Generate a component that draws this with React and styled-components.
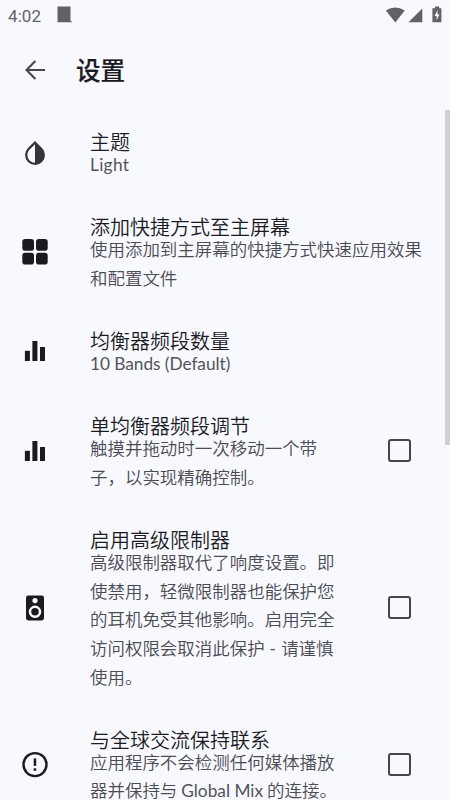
import React from "react";
import styled, { createGlobalStyle } from "styled-components";

const GlobalStyle = createGlobalStyle`
  * { box-sizing: border-box; }
  html, body { margin: 0; padding: 0; overflow: hidden; background: #f8f9ff; }
`;

const Screen = styled.main`
  width: 450px;
  height: 800px;
  overflow: hidden;
  display: flex;
  flex-direction: column;
  background: #f8f9ff;
  color: #1b1b1f;
  font-family: "Noto Sans CJK SC", sans-serif;
`;

const StatusBar = styled.header`
  flex: none;
  height: 30px;
  display: flex;
  align-items: center;
  padding: 0 8px 0 8px;
  color: #626266;
`;

const Clock = styled.span`
  width: 49px;
  font: 400 17px/30px Roboto, sans-serif;
  letter-spacing: 0.1px;
  padding-top: 1px;
`;

const StatusIcons = styled.div`
  margin-left: auto;
  display: flex;
  svg { display: block; }
`;

const AppBar = styled.div`
  flex: none;
  height: 80px;
  display: flex;
  align-items: center;
  padding-left: 25px;
  svg { display: block; margin-right: 30px; }
`;

const Heading = styled.h1`
  margin: 0;
  font-size: 24.5px;
  font-weight: 500;
  line-height: 36px;
  -webkit-text-stroke: 0.2px currentColor;
`;

const Content = styled.div`
  flex: 1;
  min-height: 0;
  display: flex;
  align-items: flex-start;
`;

const List = styled.div`
  width: 445px;
  height: 100%;
  overflow: hidden;
`;

const ScrollThumb = styled.div`
  width: 5px;
  height: 335px;
  background: #cfcfd5;
`;

const Row = styled.section`
  display: flex;
  align-items: center;
  height: ${(p) => 56.4 + p.$lines * 28.7}px;
`;

const IconSlot = styled.div`
  flex: none;
  width: 90px;
  padding-left: 20px;
  svg { display: block; }
`;

const Texts = styled.div`
  flex: none;
  width: ${(p) => (p.$wide ? 340 : 249)}px;
  padding-top: 6.8px;
`;

const Title = styled.h2`
  margin: 0;
  font-size: 20px;
  font-weight: 350;
  line-height: 17px;
  white-space: nowrap;
`;

const Description = styled.p`
  margin: 0;
  font-size: 17.48px;
  font-weight: 350;
  line-height: 28.7px;
  color: #4b4b53;
`;

const Latin = styled.span`
  font-family: Lato, sans-serif;
  font-weight: 400;
  font-size: 17.3px;
  line-height: 1;
  letter-spacing: ${(p) => p.$spacing || 0}px;
  color: #53535b;
`;

const Checkbox = styled.div`
  flex: none;
  width: 23px;
  height: 23px;
  margin-left: 49px;
  border: 2px solid #43474d;
  border-radius: 3px;
`;

const Icon = ({ children }) => (
  <svg width="30" height="30" viewBox="0 0 30 30" fill="#1b1b1f">{children}</svg>
);

const ContrastIcon = () => (
  <Icon>
    <path d="M15 4.6 L8.8 10.8 A8.8 8.8 0 1 0 21.2 10.8 Z" fill="none" stroke="#353538" strokeWidth="2.3" />
    <path d="M15 4 L21.8 10.7 A9.6 9.6 0 0 1 15 26.5 Z" fill="#353538" />
  </Icon>
);

const GridIcon = () => (
  <Icon>
    <rect x="2.3" y="2" width="11.7" height="11.7" rx="2.8" />
    <rect x="16" y="2" width="11.7" height="11.7" rx="2.8" />
    <rect x="2.3" y="15.8" width="11.7" height="11.7" rx="2.8" />
    <rect x="16" y="15.8" width="11.7" height="11.7" rx="2.8" />
  </Icon>
);

const BarsIcon = () => (
  <Icon>
    <rect x="4.9" y="14.8" width="5" height="10.2" />
    <rect x="12.4" y="5" width="5" height="20" />
    <rect x="20" y="11" width="5" height="14" />
  </Icon>
);

const SpeakerIcon = () => (
  <Icon>
    <rect x="6" y="2.4" width="18" height="25" rx="2.3" />
    <circle cx="15" cy="7.6" r="2.6" fill="#f8f9ff" />
    <circle cx="15" cy="18.8" r="5" fill="none" stroke="#f8f9ff" strokeWidth="2.5" />
  </Icon>
);

const AlertIcon = () => (
  <Icon>
    <circle cx="15" cy="14.6" r="11.5" fill="none" stroke="#1b1b1f" strokeWidth="2.4" />
    <rect x="13.7" y="8.4" width="2.5" height="7.5" />
    <rect x="13.7" y="18.3" width="2.5" height="2.5" />
  </Icon>
);

const settings = [
  { title: "主题", icon: ContrastIcon, lines: 1, text: <Latin $spacing={0.3}>Light</Latin> },
  { title: "添加快捷方式至主屏幕", icon: GridIcon, lines: 2, text: "使用添加到主屏幕的快捷方式快速应用效果和配置文件" },
  { title: "均衡器频段数量", icon: BarsIcon, lines: 1, text: <Latin $spacing={-0.05}>10 Bands (Default)</Latin> },
  { title: "单均衡器频段调节", icon: BarsIcon, lines: 2, check: true, text: "触摸并拖动时一次移动一个带子，以实现精确控制。" },
  {
    title: "启用高级限制器", icon: SpeakerIcon, lines: 5, check: true,
    text: <>高级限制器取代了响度设置。即使禁用，轻微限制器也能保护您的耳机免受其他影响。启用完全访问权限会取消此保护<Latin $spacing={0.4}> - </Latin>请谨慎使用。</>,
  },
  {
    title: "与全球交流保持联系", icon: AlertIcon, lines: 2, check: true,
    text: <>应用程序不会检测任何媒体播放器并保持与 <Latin>Global Mix</Latin> 的连接。</>,
  },
];

export default function App() {
  return (
    <Screen>
      <GlobalStyle />
      <StatusBar>
        <Clock>4:02</Clock>
        <svg width="16" height="18" viewBox="0 0 16 18" fill="#626266">
          <path d="M.5 .5H13.5V14.5L15.3 16.3H.5Z" />
        </svg>
        <StatusIcons>
          <svg width="58" height="20" viewBox="0 0 58 20" fill="#626266">
            <path d="M1.8 5.5Q11.3-.5 20.8 5.5L11.3 17.5Z" />
            <path d="M24.5 17.3L38.3 3.5V17.3Z" />
            <path d="M49.2 3.3H51V1.6H55.2V3.3H57.4V17.3H48.4V3.3Z" />
            <path d="M53.5 5L50.6 11H52.6V15.2L55.4 9.3H53.4Z" fill="#f8f9ff" />
          </svg>
        </StatusIcons>
      </StatusBar>
      <AppBar>
        <svg width="21" height="20" viewBox="0 0 21 20" fill="none" stroke="#46464a" strokeWidth="2.1">
          <path d="M20 10H2M10.4 .9L1.5 10L10.4 19.1" />
        </svg>
        <Heading>设置</Heading>
      </AppBar>
      <Content>
        <List>
          {settings.map(({ title, icon: RowIcon, lines, text, check }) => (
            <Row key={title} $lines={lines}>
              <IconSlot><RowIcon /></IconSlot>
              <Texts $wide={!check}>
                <Title>{title}</Title>
                <Description>{text}</Description>
              </Texts>
              {check && <Checkbox role="checkbox" aria-checked="false" aria-label={title} />}
            </Row>
          ))}
        </List>
        <ScrollThumb />
      </Content>
    </Screen>
  );
}
